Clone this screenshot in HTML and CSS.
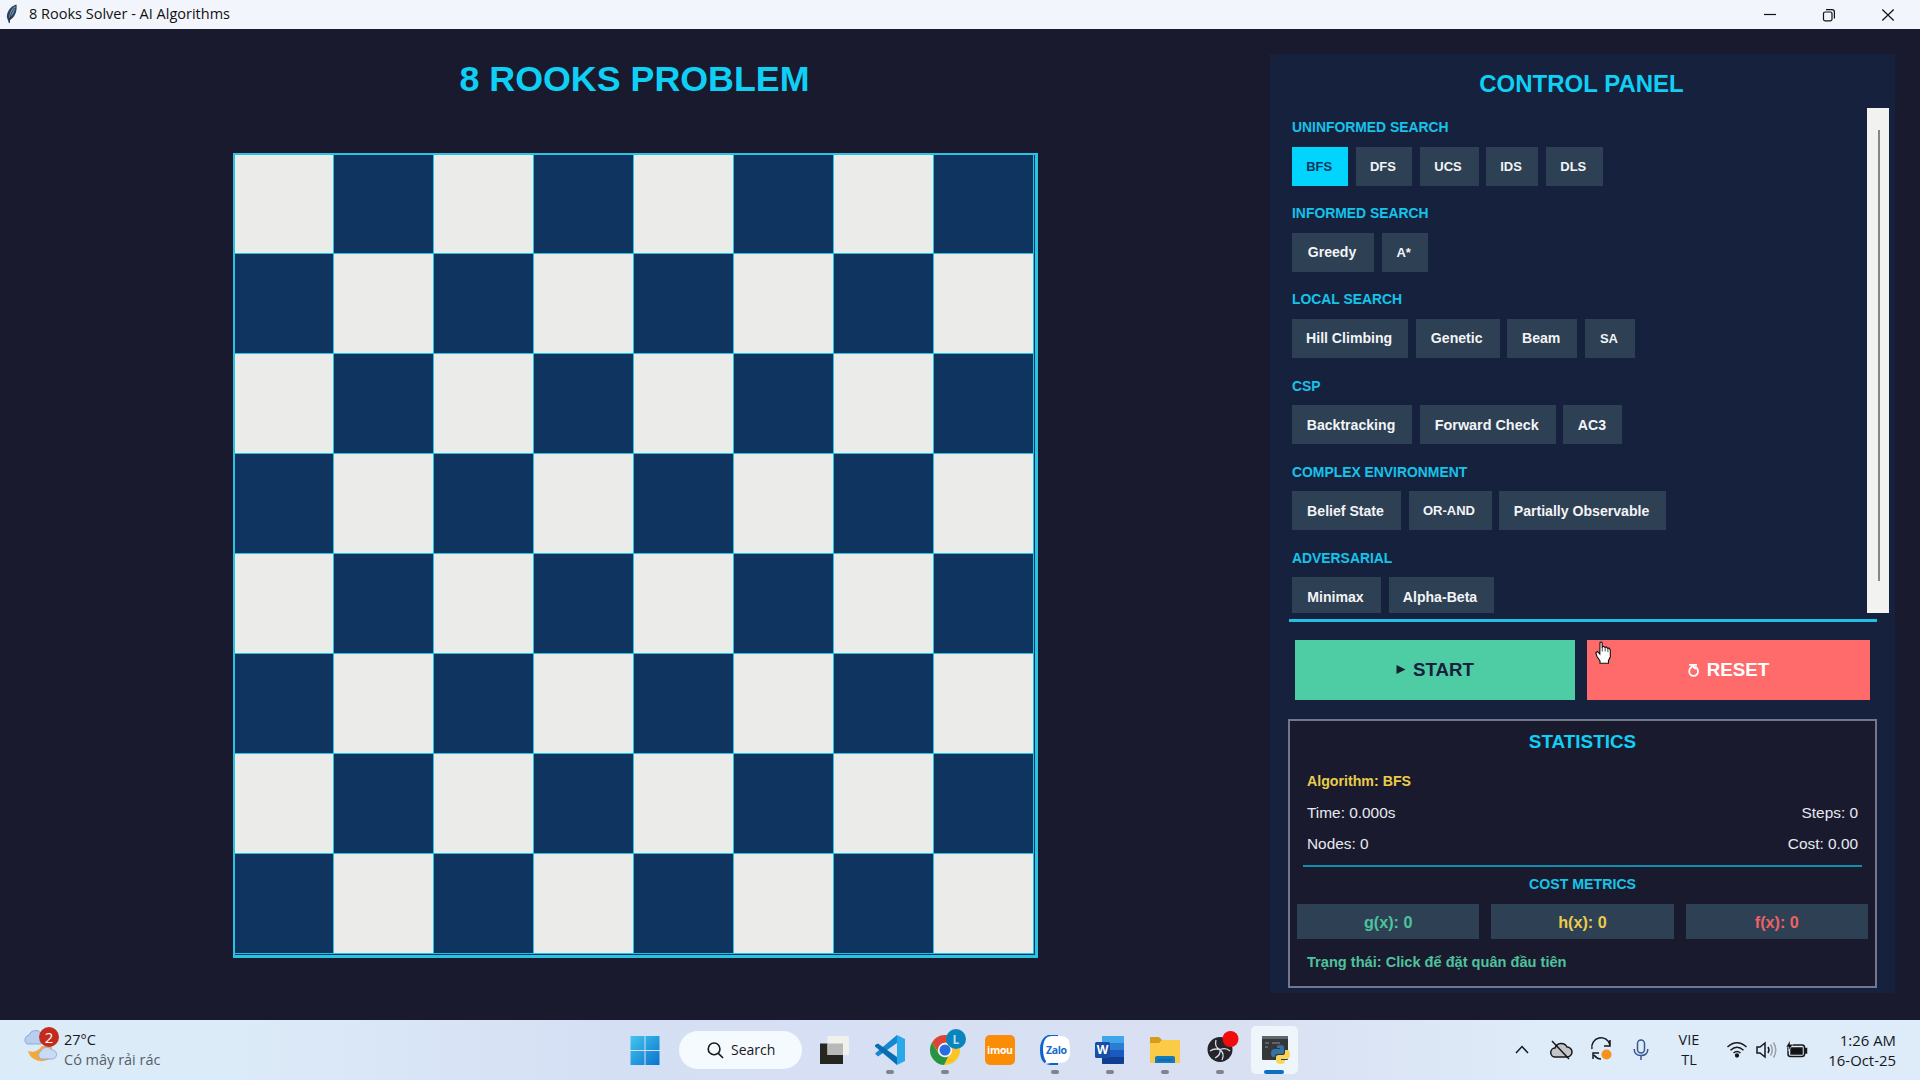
FILE: index.html
```html
<!DOCTYPE html>
<html lang="vi">
<head>
<meta charset="utf-8">
<title>8 Rooks Solver - AI Algorithms</title>
<link rel="stylesheet" href="styles.css">
</head>
<body>
<header class="titlebar">
  <svg class="feather" viewBox="0 0 12 20"><path d="M10.5 .5C6 1.500 1 6 .8 13L2 16.500 3.200 19.500 4 16C8 14 11.500 8 10.500.500Z" fill="#2f4156"/><path d="M9.500 2C6 4 3.500 8 3 14C6.500 11.500 9 7 9.500 2Z" fill="#6f9cc9"/><path d="M8.500 4C5.500 8 4 12 3.200 19" stroke="#1c2733" stroke-width=".8" fill="none"/></svg>
  <span class="app-name">8 Rooks Solver - AI Algorithms</span>
  <div class="window-controls">
    <svg viewBox="0 0 14 14"><path d="M1 6.500H13" /></svg>
    <svg viewBox="0 0 14 14"><rect x="1.500" y="4" width="8.500" height="8.800" rx="1.500"/><path d="M4 1.700H10Q12.400 1.700 12.400 4.200V10.500"/></svg>
    <svg viewBox="0 0 14 14"><path d="M1.300 1.500L12.700 12.500M12.700 1.500L1.300 12.500"/></svg>
  </div>
</header>

<main class="app">
  <section class="stage">
    <h1>8 ROOKS PROBLEM</h1>
    <div class="board">
      <i></i><i></i><i></i><i></i><i></i><i></i><i></i><i></i>
      <i></i><i></i><i></i><i></i><i></i><i></i><i></i><i></i>
      <i></i><i></i><i></i><i></i><i></i><i></i><i></i><i></i>
      <i></i><i></i><i></i><i></i><i></i><i></i><i></i><i></i>
      <i></i><i></i><i></i><i></i><i></i><i></i><i></i><i></i>
      <i></i><i></i><i></i><i></i><i></i><i></i><i></i><i></i>
      <i></i><i></i><i></i><i></i><i></i><i></i><i></i><i></i>
      <i></i><i></i><i></i><i></i><i></i><i></i><i></i><i></i>
    </div>
  </section>

  <aside class="panel">
    <h2>CONTROL PANEL</h2>
    <div class="algorithms">
      <div class="groups">
        <section><h3>UNINFORMED SEARCH</h3><div class="row"><button class="bfs active">BFS</button><button class="dfs">DFS</button><button class="ucs">UCS</button><button class="ids">IDS</button><button class="dls">DLS</button></div></section>
        <section><h3>INFORMED SEARCH</h3><div class="row"><button class="greedy">Greedy</button><button class="astar">A*</button></div></section>
        <section><h3>LOCAL SEARCH</h3><div class="row"><button class="hill">Hill Climbing</button><button class="genetic">Genetic</button><button class="beam">Beam</button><button class="sa">SA</button></div></section>
        <section><h3>CSP</h3><div class="row"><button class="backtracking">Backtracking</button><button class="forward">Forward Check</button><button class="ac3">AC3</button></div></section>
        <section><h3>COMPLEX ENVIRONMENT</h3><div class="row"><button class="belief">Belief State</button><button class="orand">OR-AND</button><button class="partial">Partially Observable</button></div></section>
        <section><h3>ADVERSARIAL</h3><div class="row"><button class="minimax">Minimax</button><button class="alpha">Alpha-Beta</button></div></section>
      </div>
      <div class="scrollbar"><span></span></div>
    </div>
    <div class="rule"></div>
    <div class="actions">
      <button class="start"><svg viewBox="0 0 10 12"><path d="M.5 1L9.500 5.500.500 10Z"/></svg>START</button>
      <button class="reset"><svg viewBox="0 0 12 14"><path d="M2.500 5Q1.200 6.500 1.200 8.500A4.400 4.300 0 0 0 10 8.500Q10 5 7 3.500" fill="none" stroke="currentColor" stroke-width="1.800"/><path d="M1 1H9V2.800H6L8.500 5.500 7 6.800 4.500 4.300 2.500 6.300 1.200 5 3.500 2.800H1Z"/></svg>RESET</button>
      <svg class="cursor" viewBox="0 0 16 23"><path d="M5 1.500Q6.300.300 7.200 1.800V6L8.500 5.300 10 6.500 11.500 6 12.800 7.500 14 7 15.300 9V16L13.500 19.500V22.300H5V20L2 15.500.800 11.700 2.500 10.500 4.800 13Z" fill="#fff" stroke="#111" stroke-width="1.100"/><path d="M7.300 6V10.500M10.200 6.800V10.500M12.900 7.500V11" stroke="#222" stroke-width=".8"/></svg>
    </div>
    <section class="stats">
      <h4>STATISTICS</h4>
      <p class="algorithm">Algorithm: BFS</p>
      <p class="pair"><span>Time: 0.000s</span><span>Steps: 0</span></p>
      <p class="pair"><span>Nodes: 0</span><span>Cost: 0.00</span></p>
      <div class="divider"></div>
      <h5>COST METRICS</h5>
      <div class="metrics"><span class="g">g(x): 0</span><span class="h">h(x): 0</span><span class="f">f(x): 0</span></div>
      <p class="status">Trạng thái: Click để đặt quân đầu tiên</p>
    </section>
  </aside>
</main>

<footer class="taskbar">
  <div class="weather">
    <svg viewBox="0 0 36 38"><path d="M3 18A5 5 0 0 1 5 9 7 7 0 0 1 17 7V18Z" fill="#b9cdec" stroke="#8faadb"/><path d="M4 25Q12 28 18 20H28V32Q18 38 10 33Q5 30 4 25Z" fill="#f5a93c"/><path d="M17 33A4.500 4.500 0 0 1 17 25 6.500 6.500 0 0 1 28 24 4.500 4.500 0 0 1 28 33Z" fill="#c9daf3" stroke="#93b0dd"/><circle cx="25" cy="11" r="10" fill="#c42b1c"/><text x="25" y="16.500">2</text></svg>
    <div><b>27°C</b><span>Có mây rải rác</span></div>
  </div>

  <nav class="apps">
    <div class="slot start-menu"><svg viewBox="0 0 30 30"><defs><linearGradient id="win" x1="0" y1="0" x2="1" y2="1"><stop offset="0" stop-color="#45c5f0"/><stop offset="1" stop-color="#0874cc"/></linearGradient></defs><path d="M.5 1H14.500V15H.500ZM15.500 1H29.500V15H15.500ZM.500 16H14.500V30H.500ZM15.500 16H29.500V30H15.500Z" fill="url(#win)"/></svg></div>
    <div class="search"><svg viewBox="0 0 18 18"><circle cx="7.500" cy="7.300" r="6.200"/><path d="M12 12L17 17"/></svg>Search</div>
    <div class="slot"><svg viewBox="0 0 30 30"><path d="M0 8.500H23V29H0Z" fill="#25261f"/><path d="M7.500 1H29V20H7.500Z" fill="#f0f1ea"/><path d="M7.500 8.500H23V20H7.500Z" fill="#b8b8b8"/></svg></div>
    <div class="slot open"><svg viewBox="0 0 30 30"><path d="M0 18.500L22 0V8L3 21.500Z" fill="#1687d0"/><path d="M0 11.500V10L3 8.500 22 22V30Z" fill="#086eb3"/><path d="M22 0L30 4V26L22 30Z" fill="#29a8ea"/></svg></div>
    <div class="slot open"><svg viewBox="0 0 30 30"><circle cx="15" cy="15" r="15" fill="#f9c529"/><path d="M2 7.500A15 15 0 0 1 28 7.500H15L9 18Z" fill="#dc4437"/><path d="M2 7.500L9 19Q12 23 18 22L14 30A15 15 0 0 1 2 7.500Z" fill="#249447"/><circle cx="15" cy="15" r="7.200" fill="#f5f8ff"/><circle cx="15" cy="15" r="5.500" fill="#276ee0"/><circle cx="26" cy="4" r="10" fill="#0984bd"/><text class="badge-letter" x="26" y="8.500">L</text></svg></div>
    <div class="slot"><svg viewBox="0 0 30 30"><rect width="30" height="30" rx="5" fill="#fb8c05"/><text class="imou" x="15" y="18.500" textLength="26">imou</text></svg></div>
    <div class="slot open"><svg viewBox="0 0 30 30"><path d="M8 0H18V30H10Q0 29 0 15 0 3 8 0Z" fill="#0b63ce"/><path d="M12 1H21Q30 1 30 12V17Q30 28 19 28H11L5 29 6 26Q3 22 3 14 3 1 12 1Z" fill="#fff"/><text class="zalo" x="16.500" y="18.500" textLength="21">Zalo</text></svg></div>
    <div class="slot open"><svg viewBox="0 0 30 30"><rect x="7" y="1" width="22" height="28" rx="1.500" fill="#185abd"/><path d="M7 2.500Q7 1 8.500 1H27.500Q29 1 29 2.500V8H7Z" fill="#41a5ee"/><path d="M7 8H29V15H7Z" fill="#2b7cd3"/><path d="M7 22H29V28Q29 29 28 29H8Q7 29 7 28Z" fill="#103f91"/><rect y="7" width="15" height="16" rx="1.500" fill="#174ea6"/><text class="word" x="7.500" y="19">W</text></svg></div>
    <div class="slot open"><svg viewBox="0 0 30 30"><path d="M0 3Q0 2 1 2H9L12 5H29Q30 5 30 6V14H0Z" fill="#d79b17"/><path d="M0 8H9L12 5H29Q30 5 30 6V28H0Z" fill="#fbca46"/><path d="M5 28V23Q5 21 7 21H23Q25 21 25 23V28Z" fill="#1579bd"/><path d="M8 25H22" stroke="#0b5e99"/></svg></div>
    <div class="slot open"><svg viewBox="0 0 30 30"><circle cx="15" cy="14.500" r="12.500" fill="#24242a"/><path d="M11 5Q9 12 15 14.500Q21 12 25 16M15 14.500Q16 20 10 23M15 14.500Q9 13 5 16M15 14.500Q20 19 17 25" stroke="#d7d9e4" stroke-width="1.300" fill="none"/><circle cx="25.500" cy="4" r="8" fill="#f40b0b"/></svg></div>
    <div class="slot open current"><svg viewBox="0 0 30 30"><rect x="2" y="1" width="26" height="24" rx="1" fill="#34383a"/><path d="M2 1H28V4H2Z" fill="#60676b"/><path d="M5 8H9M5 12H8M12 8H20" stroke="#899094"/><path d="M17 11Q17 10 20 10 24 10 24 12V17Q24 19 21 19H17Q15 19 15 22H13Q11 22 11 18 11 14 15 14H20V13H17Z" fill="#3572a8"/><path d="M25 15H27Q30 15 30 19 30 24 27 24H21V25H25V26Q25 29 21 29 16 29 16 26V22Q16 20 19 20H23Q25 20 25 17Z" fill="#f8d65c"/></svg></div>
  </nav>

  <div class="tray">
    <svg class="chevron" viewBox="0 0 14 9"><path d="M1 8L7 1.500 13 8"/></svg>
    <svg class="cloud" viewBox="0 0 22 20"><path d="M5.500 17A4.500 4.500 0 0 1 5 8 6.500 6.500 0 0 1 17 7 5 5 0 0 1 17 17Z" fill="#c1c4c8"/><path d="M2 1L19 19"/></svg>
    <svg class="sync" viewBox="0 0 22 22"><path d="M1 10A9 9 0 0 1 19 6M19 1V7H13M2 20V14H8M3 16Q6 20 10 20"/><circle cx="15.500" cy="15.500" r="5" class="dot"/></svg>
    <svg class="mic" viewBox="0 0 16 22"><rect x="4.500" y="1" width="7" height="13" rx="3.500"/><path d="M1.200 10Q1.200 16.500 8 16.500 14.800 16.500 14.800 10M8 17V21"/></svg>
    <div class="language"><span>VIE</span><span>TL</span></div>
    <svg class="wifi" viewBox="0 0 22 18"><path d="M1.500 7Q11-1.500 20.500 7M4.500 10.200Q11 4.200 17.500 10.200M7.500 13Q11 10 14.500 13"/><circle cx="11" cy="15.500" r="1.400" fill="#111"/></svg>
    <svg class="speaker" viewBox="0 0 22 18"><path d="M1 6H4L9 2V16L4 12H1ZM12 6Q14 9 12 12"/><path d="M14.500 3.500Q18 9 14.500 14.500M17.500 1.500Q22 9 17.500 16.500" opacity=".35"/></svg>
    <svg class="battery" viewBox="0 0 22 18"><rect x="2" y="5" width="16.500" height="11.500" rx="2.500"/><path d="M5 8H16V14H5ZM19 8.500H20.500V13H19Z" fill="#111"/><path d="M4 .5L0 7H3L2 11 7 4.500H4Z" fill="#111" stroke="#dfeefa" stroke-width=".5"/></svg>
    <div class="clock"><span>1:26 AM</span><span>16-Oct-25</span></div>
  </div>
</footer>
</body>
</html>
```
FILE: styles.css
```css
* { box-sizing: border-box; }
body {
  margin: 0;
  width: 1920px;
  height: 1080px;
  overflow: hidden;
  display: flex;
  flex-direction: column;
  background: #1a1a2e;
  font-family: "Liberation Sans", Arial, sans-serif;
}
h1, h2, h3, h4, h5, p { margin: 0; }
button { border: 0; padding: 0; font: inherit; color: inherit; }
svg { display: block; overflow: visible; }

.titlebar {
  height: 29px;
  flex: none;
  display: flex;
  align-items: center;
  padding-left: 6px;
  background: #f2f6fc;
  color: #111;
  font: 14.500px/28px "Open Sans", sans-serif;
}
.feather { width: 12px; height: 20px; margin-top: -2px; }
.app-name { margin: -1px 0 0 11px; }
.window-controls { display: flex; gap: 45px; margin-left: auto; margin-right: 25px; }
.window-controls svg { width: 14px; height: 14px; fill: none; stroke: #111; stroke-width: 1.200; }

.app { height: 991px; flex: none; display: flex; }
.stage {
  width: 1269px;
  flex: none;
  display: flex;
  flex-direction: column;
  align-items: center;
}
h1 {
  height: 124px;
  flex: none;
  padding-top: 30px;
  font-size: 35.800px;
  line-height: 40px;
  color: #10cff5;
}
.board {
  width: 805px;
  height: 805px;
  margin-left: 2px;
  border: 3px solid #27c4e3;
  border-width: 2px 3px 3px 2px;
  background: #0f3460;
  display: grid;
  grid-template-columns: 99px repeat(7, 100px);
  grid-template-rows: 99px repeat(7, 100px);
}
.board i {
  background: #0f3460;
  border-right: 1px solid #1fc3e4;
  border-bottom: 1px solid #1fc3e4;
}
.board i:nth-child(16n+1), .board i:nth-child(16n+3), .board i:nth-child(16n+5), .board i:nth-child(16n+7),
.board i:nth-child(16n+10), .board i:nth-child(16n+12), .board i:nth-child(16n+14), .board i:nth-child(16n+16) { background: #ebebea; }

.panel {
  width: 625px;
  height: 939px;
  margin: 25px 0 0 1px;
  display: flex;
  flex-direction: column;
  background: #16213e;
}
h2 {
  height: 54px;
  flex: none;
  padding: 16px 2px 0 0;
  font-size: 24px;
  line-height: 28px;
  text-align: center;
  color: #10cff5;
}
.algorithms { height: 505px; flex: none; display: flex; justify-content: space-between; padding: 0 6px 0 22px; }
.groups { height: 505px; overflow: hidden; }
.groups section { height: 86.200px; }
.groups h3 {
  padding-top: 10px;
  height: 38.500px;
  font-size: 13.900px;
  line-height: 18px;
  color: #16c3e9;
}
.row { display: flex; gap: 7.500px; }
.row button {
  height: 39px;
  padding-right: 2px;
  background: #2d4054;
  color: #f3f4f6;
  font-size: 14.100px;
  font-weight: bold;
  white-space: nowrap;
}
.row .active { background: #00d4ff; color: #12385a; }
.row .bfs, .row .dfs { width: 56.250px; font-size: 13px; }
.row .ucs { width: 59px; font-size: 13px; }
.row .ids { width: 52px; font-size: 13px; }
.row .dls { width: 57.500px; font-size: 13px; }
.greedy { width: 82px; }
.row .astar { width: 46.300px; font-size: 13px; }
.hill { width: 116.200px; }
.genetic { width: 84px; }
.beam { width: 70px; }
.row .sa { width: 50.500px; font-size: 13px; }
.backtracking { width: 120px; }
.row .forward { width: 136.400px; font-size: 14.400px; }
.row .ac3 { width: 59px; }
.belief { width: 109px; }
.row .orand { width: 83px; font-size: 13px; }
.partial { width: 167px; }
.minimax { width: 89px; }
.alpha { width: 105px; }
.scrollbar { width: 22px; background: #f2f2f0; padding: 22px 0 32px 11px; }
.scrollbar span { display: block; width: 2px; height: 100%; background: #878787; }
.rule { height: 3px; flex: none; margin: 6px 18px 0 19px; background: #23bfe5; }
.actions {
  position: relative;
  display: grid;
  grid-template-columns: 280px 283px;
  gap: 12px;
  margin: 18px 0 0 25px;
}
.actions button {
  height: 60px;
  display: flex;
  align-items: center;
  justify-content: center;
  gap: 7px;
  font-size: 18.700px;
  font-weight: bold;
}
.start { background: #4ecca3; color: #16213e; }
.start svg { width: 10px; height: 12px; fill: #13202f; }
.reset { background: #ff6b6b; color: #fff; }
.reset svg { width: 12px; height: 14px; fill: #fff; }
.cursor { position: absolute; left: 300px; top: 1px; width: 16px; height: 23px; }

.stats {
  height: 269px;
  flex: none;
  margin: 19px 18px 0 18px;
  padding: 0 7px;
  border: 2px solid #72778a;
  background: #1a1a2e;
  color: #e8e9ee;
}
.stats p { padding: 0 10px; font-size: 15.400px; line-height: 20px; }
h4 { padding-top: 10px; font-size: 18.900px; line-height: 22px; text-align: center; color: #10cff5; }
.stats .algorithm { margin-top: 18px; font-size: 14.200px; font-weight: bold; color: #e9cc4a; }
.stats .pair { display: flex; justify-content: space-between; margin-top: 12px; }
.stats .pair + .pair { margin-top: 11px; }
.divider { height: 2px; margin: 11px 6px 0; background: #118eae; }
h5 { margin-top: 7px; font-size: 14.200px; line-height: 20px; text-align: center; color: #16c3e9; }
.metrics { display: grid; grid-template-columns: repeat(3, 1fr); gap: 12px; margin-top: 10px; }
.metrics span {
  height: 35px;
  background: #2d4054;
  font-size: 16.200px;
  font-weight: bold;
  line-height: 36px;
  text-align: center;
}
.metrics .g { color: #4ec29d; }
.metrics .h { color: #e9cc4a; }
.metrics .f { color: #ee6165; }
.stats .status { margin-top: 13px; font-size: 14.600px; font-weight: bold; color: #4ec29d; }

.taskbar {
  height: 60px;
  flex: none;
  display: flex;
  background: linear-gradient(90deg, #dcebf8 0, #dcebf8 12%, #d5dff4 32%, #d9e0f2 65%, #deebf8 80%, #deebf8);
  color: #16181c;
  font: 14.500px/20px "Open Sans", sans-serif;
}
.weather { width: 616px; display: flex; padding: 6px 0 0 24px; gap: 4px; }
.weather svg { width: 36px; height: 38px; }
.weather svg text { font: 15px "Open Sans", sans-serif; fill: #fff; text-anchor: middle; }
.weather div { display: flex; flex-direction: column; padding-top: 4px; }
.weather b { font-weight: 400; }
.weather span { color: #555e69; }
.apps { width: 686px; display: flex; align-items: flex-start; }
.slot {
  position: relative;
  width: 55px;
  height: 60px;
  flex: none;
  display: grid;
  justify-items: center;
  padding-top: 15px;
}
.slot svg { position: relative; width: 30px; height: 30px; }
.open::after {
  content: "";
  position: absolute;
  left: 24px;
  top: 50px;
  width: 8px;
  height: 4px;
  border-radius: 2px;
  background: #80838c;
}
.current::before {
  content: "";
  position: absolute;
  left: 4px;
  top: 6px;
  width: 47px;
  height: 48px;
  border-radius: 5px;
  background: #eef6fc;
}
.current::after { left: 17px; width: 20px; background: #0b71bf; }
.search {
  width: 123px;
  height: 38px;
  margin: 11px 5px 0 8px;
  flex: none;
  display: flex;
  align-items: center;
  padding-left: 28px;
  gap: 7px;
  border-radius: 19px;
  background: #f5fafe;
  font-size: 14px;
}
.search svg { width: 17px; height: 17px; fill: none; stroke: #16181c; stroke-width: 1.700; }
.start-menu svg { left: 1px; }
.badge-letter { font: bold 12px "Open Sans", sans-serif; fill: #b7dcf0; text-anchor: middle; }
.imou { font: bold 10.500px "Open Sans", sans-serif; fill: #fff; text-anchor: middle; }
.zalo { font: bold 10.500px "Open Sans", sans-serif; fill: #1668cc; text-anchor: middle; }
.word { font: bold 12px "Open Sans", sans-serif; fill: #fff; text-anchor: middle; }
.tray { flex: 1; display: flex; align-items: flex-start; padding-left: 213px; }
.tray svg { flex: none; fill: none; stroke: #16181c; stroke-width: 1.500; }
.chevron { width: 14px; height: 9px; margin-top: 25px; }
.cloud { width: 22px; height: 20px; margin: 20px 0 0 21px; }
.sync { width: 22px; height: 22px; margin: 19px 0 0 19px; }
.tray .sync .dot { fill: #f6921e; stroke: none; }
.tray .mic { width: 16px; height: 22px; margin: 19px 0 0 20px; stroke: #345a91; }
.language, .clock { display: flex; flex-direction: column; padding-top: 10px; }
.language { width: 40px; margin-left: 20px; text-align: center; }
.wifi { width: 22px; height: 18px; margin: 20px 0 0 17px; }
.speaker { width: 22px; height: 18px; margin: 21px 0 0 8px; }
.battery { width: 22px; height: 18px; margin: 20px 0 0 8px; }
.clock { margin-left: auto; margin-right: 24px; text-align: right; font-size: 14.900px; }
```
